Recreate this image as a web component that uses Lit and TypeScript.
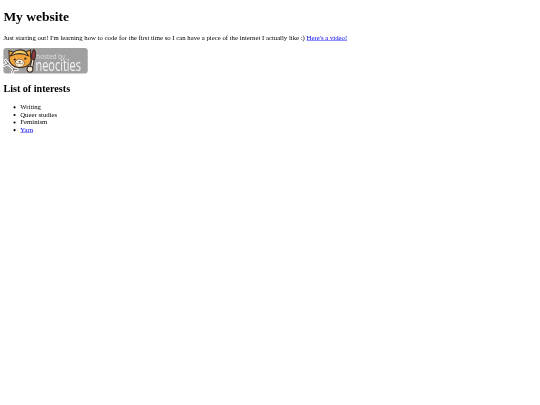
import { LitElement, html, css, svg } from "lit";
import { customElement } from "lit/decorators.js";

const cat = svg`
  <g stroke="#3a2a22" stroke-width="2.4" stroke-linejoin="round" stroke-linecap="round">
    <path d="M11 37 L5 29 M11 37 L2 41 M11 37 L25 50 M25 50 L21 58 M25 50 L33 51" fill="none" stroke="#fff" stroke-width="7"/>
    <path d="M11 37 L5 29 M11 37 L2 41 M11 37 L25 50 M25 50 L21 58 M25 50 L33 51" fill="none" stroke-width="1.6"/>
    <path d="M14 20 L13 6 L24 10 C32 3 46 3 53 9 L65 4 L64 20 C68 28 65 39 55 43 C43 48 27 47 20 39 C15 34 13 27 14 20 Z" fill="#f2a53a"/>
    <path d="M24 10 C32 3 46 3 53 9 L60 19 C46 11 30 12 16 19 Z" fill="#edd06a"/>
    <path d="M29 31 C33 25 44 25 48 31 C53 38 45 45 38 45 C30 45 25 38 29 31 Z" fill="#fff3dc" stroke-width="1.3"/>
    <circle cx="27" cy="27" r="2.6" fill="#3a2a22" stroke="none"/>
    <circle cx="52" cy="25" r="2.6" fill="#3a2a22" stroke="none"/>
    <path d="M35 31 L42 31 L38.500 35 Z" fill="#3a2a22" stroke="none"/>
    <path d="M31 36 Q35 40 38.500 36 Q42 40 46 35" fill="none" stroke-width="1.300"/>
    <path d="M68 25 L73 27 L69 50 L63 48 Z" fill="#f4e9d2"/>
    <path d="M72 3 C78 8 77 19 73 28 L67 25 C66 17 68 9 72 3 Z" fill="#8e3a3f"/>
    <circle cx="63" cy="50" r="7" fill="#f4e9d2"/>
  </g>`;

@customElement("app-root")
export class AppRoot extends LitElement {
  static styles = css`
    :host {
      display: block;
      width: 540px;
      height: 405px;
      overflow: hidden;
      font-family: "Liberation Serif", "Times New Roman", serif;
      font-size: 16px;
      color: #000;
    }
    .page {
      display: flow-root;
      width: 1264px;
      padding: 0 8px;
      transform: scale(0.421875);
      transform-origin: top left;
      filter: blur(0.3px);
    }
    h1 {
      font-size: 2em;
      font-weight: bold;
      margin: 0.67em 0;
    }
    h2 {
      font-size: 1.5em;
      font-weight: bold;
      margin: 0.83em 0;
    }
    p {
      margin: 1em 0;
    }
    ul {
      margin: 1em 0;
      padding-left: 40px;
      list-style: disc;
    }
    a {
      color: #0000ee;
      text-decoration: underline;
    }
    .badge {
      display: inline;
      width: 200px;
      height: 60px;
      overflow: visible;
    }
    .hosted {
      font-family: "Open Sans", "Liberation Sans", sans-serif;
      font-size: 15px;
      fill: #dedede;
    }
    .name {
      font-family: "Open Sans", "Liberation Sans", sans-serif;
      font-size: 26px;
      fill: #f4f4f4;
    }
  `;

  render() {
    return html`<div class="page">
      <h1>My website</h1>
      <p>
        Just starting out! I'm learning how to code for the first time so I can have a piece of
        the internet I actually like :) <a href="#">Here's a video!</a>
      </p>
      <a href="#" aria-label="Hosted by Neocities">
        <svg class="badge" viewBox="0 0 200 60" xmlns="http://www.w3.org/2000/svg">
          <rect x="0" y="0" width="200" height="60" rx="7" fill="#a0a0a0"/>
          ${cat}
          <text class="hosted" x="78" y="25">hosted by,</text>
          <g transform="translate(76 54) scale(1 1.5)">
            <text class="name" x="0" y="0">neocities</text>
          </g>
        </svg>
      </a>
      <h2>List of interests</h2>
      <ul>
        <li>Writing</li>
        <li>Queer studies</li>
        <li>Feminism</li>
        <li><a href="#">Yarn</a></li>
      </ul>
    </div>`;
  }
}
